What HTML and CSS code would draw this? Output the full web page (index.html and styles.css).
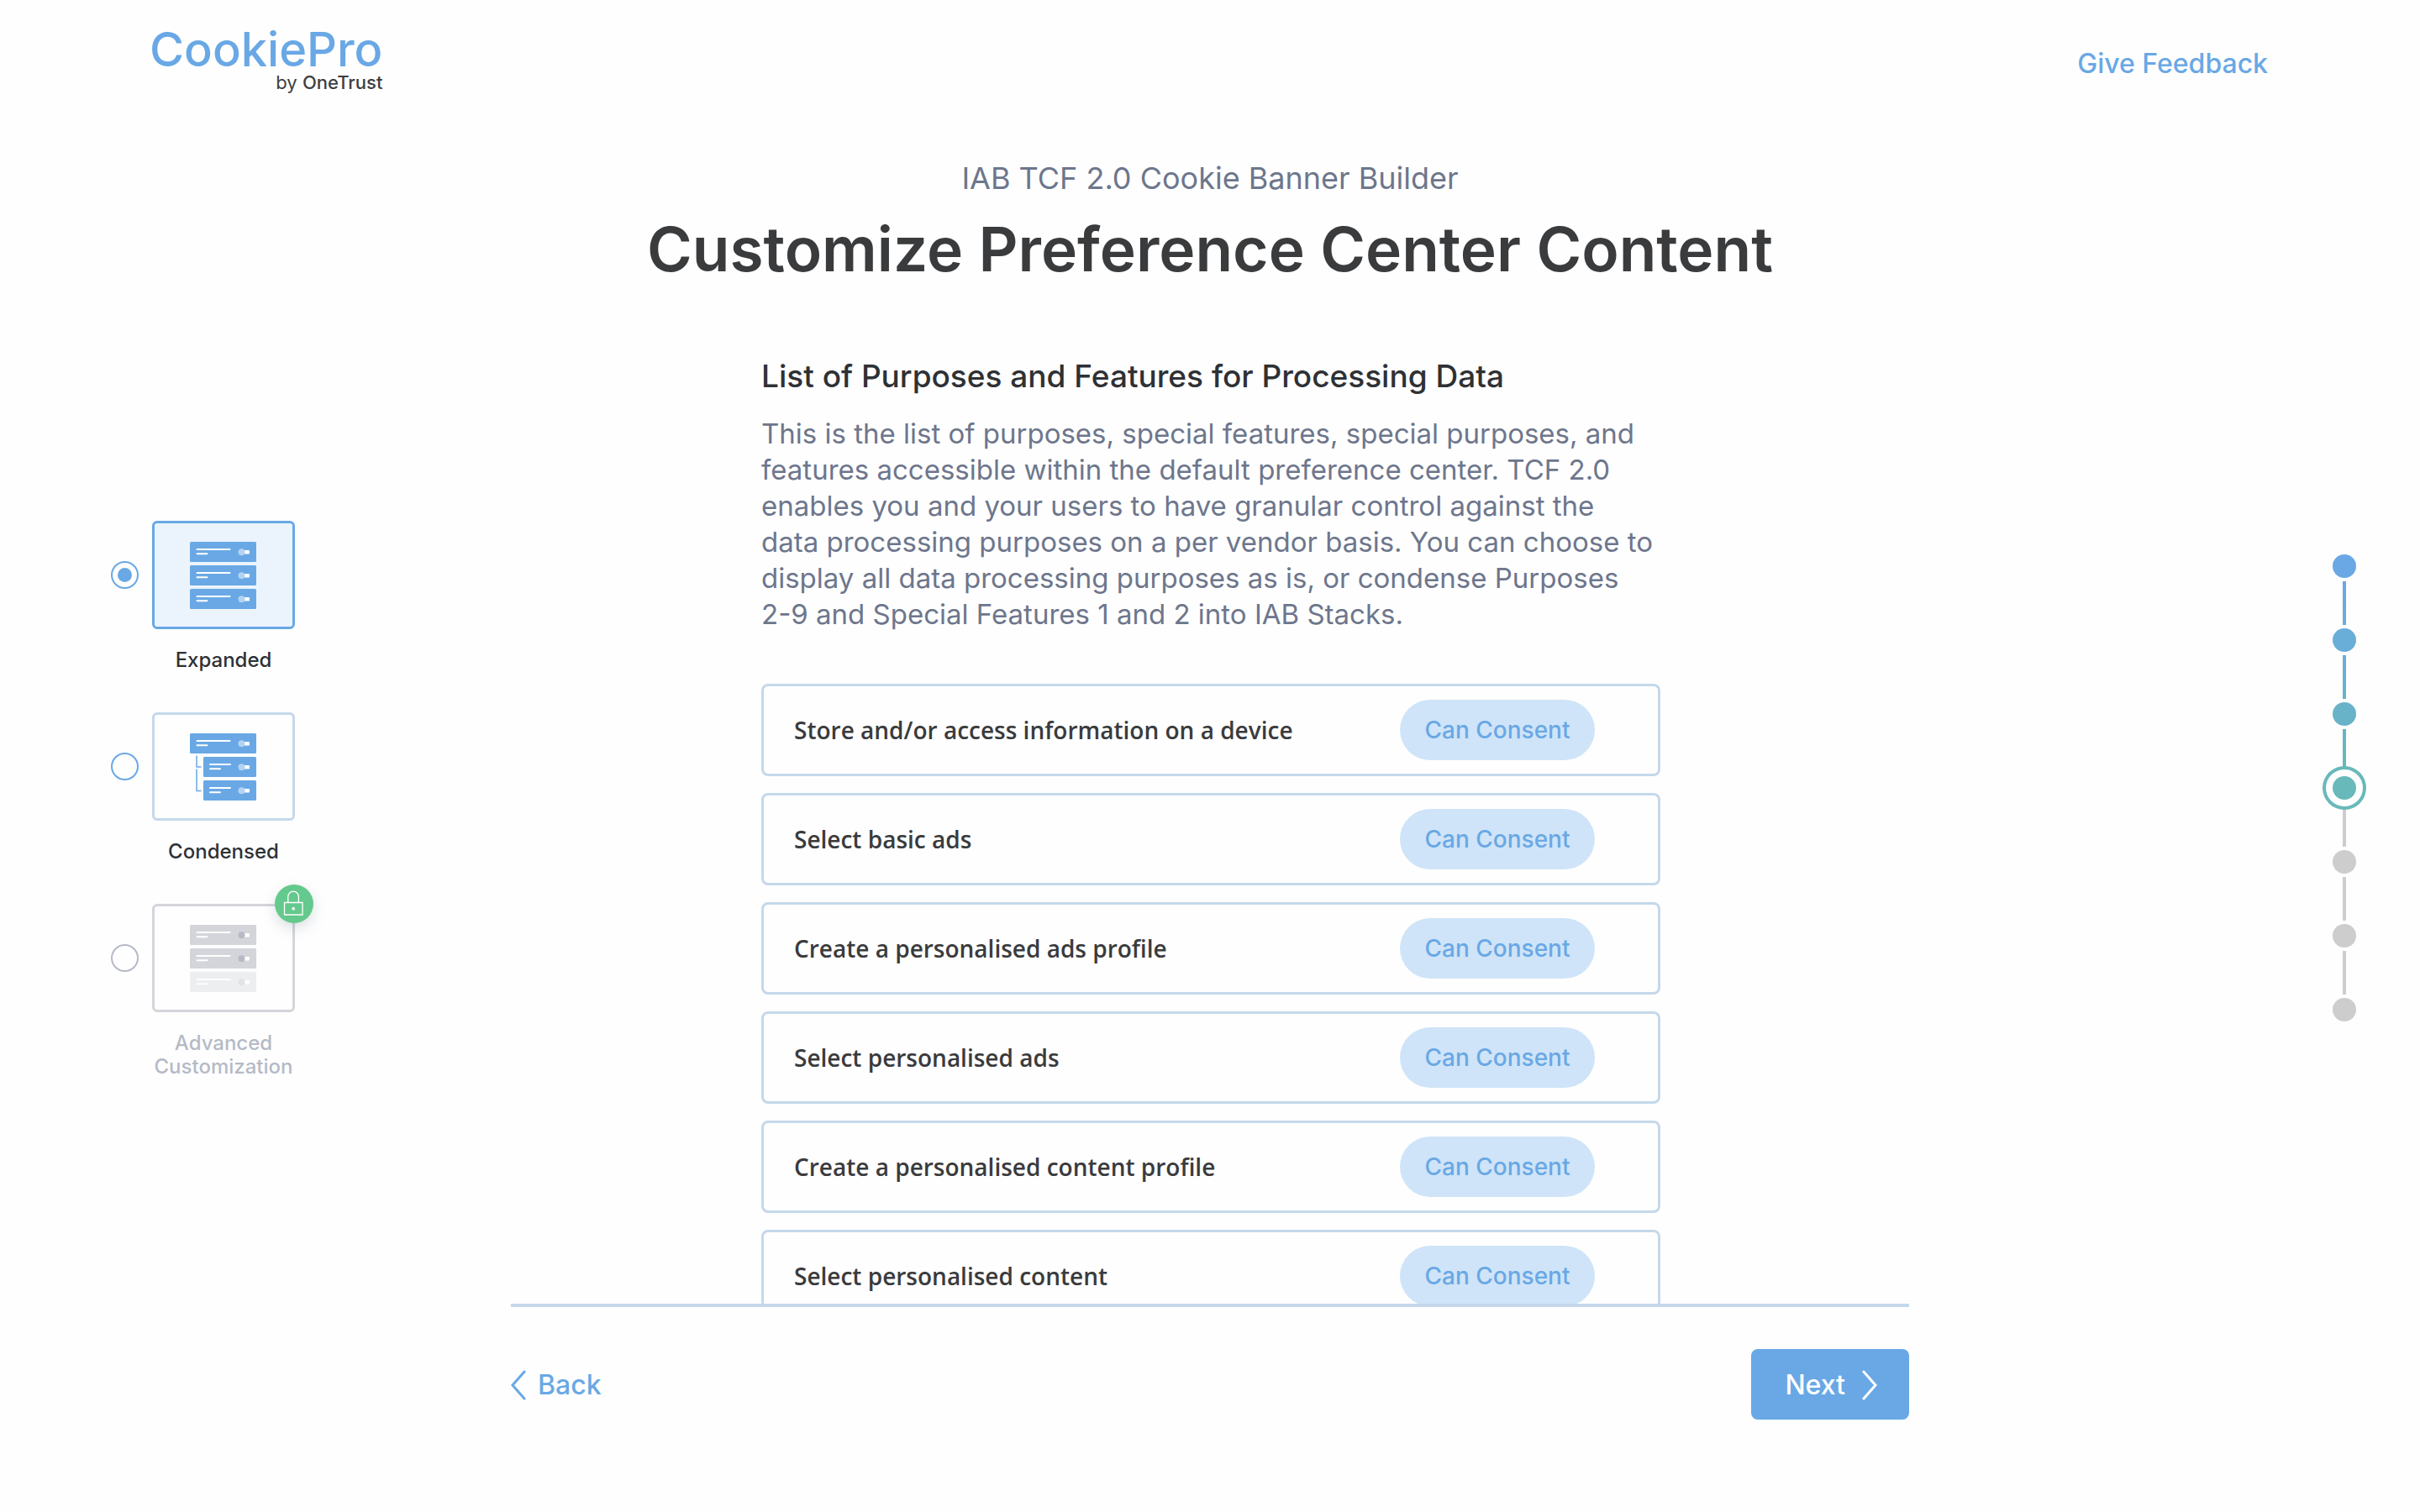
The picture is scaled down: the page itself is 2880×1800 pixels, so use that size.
FILE: index.html
```html
<!DOCTYPE html>
<html lang="en">
<head>
<meta charset="utf-8">
<meta name="viewport" content="width=device-width, initial-scale=1">
<title>CookiePro – Customize Preference Center Content</title>
<link rel="stylesheet" href="styles.css">
</head>
<body>
<svg class="defs" aria-hidden="true">
  <symbol id="bar-detail" viewBox="0 0 79 24">
    <path class="line" d="M8.500 9H47.500M8.500 14.300H20.500"/>
    <rect class="track" x="64" y="10" width="7" height="4.400" rx="1"/>
    <circle class="knob" cx="61.500" cy="12.200" r="4"/>
  </symbol>
</svg>

<header class="header">
  <a class="logo" href="#">
    <span class="logo-name">CookiePro</span>
    <span class="logo-by">by <b>OneTrust</b></span>
  </a>
  <a class="feedback" href="#">Give Feedback</a>
</header>

<main class="main">
  <div class="layouts" role="radiogroup" aria-label="Layout">
    <label class="option">
      <input class="radio" type="radio" name="layout" checked>
      <span class="thumb">
        <svg class="picture" viewBox="0 0 80 80" aria-hidden="true">
          <rect width="79" height="24" rx="1.500"/><use href="#bar-detail" width="79" height="24"/>
          <rect y="28" width="79" height="24" rx="1.500"/><use href="#bar-detail" y="28" width="79" height="24"/>
          <rect y="56" width="79" height="24" rx="1.500"/><use href="#bar-detail" y="56" width="79" height="24"/>
        </svg>
      </span>
      <span class="option-name">Expanded</span>
    </label>
    <label class="option">
      <input class="radio" type="radio" name="layout">
      <span class="thumb">
        <svg class="picture" viewBox="0 0 80 80" aria-hidden="true">
          <rect width="79" height="24" rx="1.500"/><use href="#bar-detail" width="79" height="24"/>
          <path class="tree" d="M8 26.500V40H13.500M8 42.500V68.500H13.500"/>
          <rect x="16" y="28" width="63" height="24" rx="1.500"/>
          <rect x="16" y="56" width="63" height="24" rx="1.500"/>
          <path class="line" d="M24 37H48M24 42.300H36M24 65H48M24 70.300H36"/>
          <rect class="track" x="64" y="38" width="7" height="4.400" rx="1"/><circle class="knob" cx="61.500" cy="40.200" r="4"/>
          <rect class="track" x="64" y="66" width="7" height="4.400" rx="1"/><circle class="knob" cx="61.500" cy="68.200" r="4"/>
        </svg>
      </span>
      <span class="option-name">Condensed</span>
    </label>
    <label class="option">
      <input class="radio" type="radio" name="layout" disabled>
      <span class="thumb">
        <svg class="picture" viewBox="0 0 80 80" aria-hidden="true">
          <rect width="79" height="24" rx="1.500"/><use href="#bar-detail" width="79" height="24"/>
          <rect y="28" width="79" height="24" rx="1.500"/><use href="#bar-detail" y="28" width="79" height="24"/>
          <g opacity=".38"><rect y="56" width="79" height="24" rx="1.500"/><use href="#bar-detail" y="56" width="79" height="24"/></g>
        </svg>
        <svg class="lock" viewBox="0 0 46 46" aria-hidden="true">
          <path d="M11.500 21.500H33V36H11.500ZM15.800 21.500V14.500A6.300 6.300 0 0 1 28.400 14.500V21.500"/>
          <circle cx="22.200" cy="28.700" r="1.200"/>
        </svg>
      </span>
      <span class="option-name">Advanced Customization</span>
    </label>
  </div>

  <section class="builder">
    <p class="kicker">IAB TCF 2.0 Cookie Banner Builder</p>
    <h1 class="title">Customize Preference Center Content</h1>
    <div class="scroller">
      <div class="content">
        <h2 class="heading">List of Purposes and Features for Processing Data</h2>
        <p class="text">This is the list of purposes, special features, special purposes, and features accessible within the default preference center. TCF 2.0 enables you and your users to have granular control against the data processing purposes on a per vendor basis. You can choose to display all data processing purposes as is, or condense Purposes <span class="nowrap">2-9</span> and Special Features 1 and 2 into IAB Stacks.</p>
        <ul class="purposes">
          <li class="purpose"><span>Store and/or access information on a device</span><span class="pill">Can Consent</span></li>
          <li class="purpose"><span>Select basic ads</span><span class="pill">Can Consent</span></li>
          <li class="purpose"><span>Create a personalised ads profile</span><span class="pill">Can Consent</span></li>
          <li class="purpose"><span>Select personalised ads</span><span class="pill">Can Consent</span></li>
          <li class="purpose"><span>Create a personalised content profile</span><span class="pill">Can Consent</span></li>
          <li class="purpose"><span>Select personalised content</span><span class="pill">Can Consent</span></li>
        </ul>
      </div>
    </div>
    <div class="actions">
      <button class="button back" type="button">
        <svg class="chevron" viewBox="0 0 18 36" aria-hidden="true"><path d="M16 2L2 18L16 34"/></svg>
        Back
      </button>
      <button class="button next" type="button">
        Next
        <svg class="chevron" viewBox="0 0 18 36" aria-hidden="true"><path d="M2 2L16 18L2 34"/></svg>
      </button>
    </div>
  </section>

  <ol class="steps" aria-label="Progress">
    <li class="step step-1"></li>
    <li class="step step-2"></li>
    <li class="step step-3"></li>
    <li class="step step-4" aria-current="step"></li>
    <li class="step"></li>
    <li class="step"></li>
    <li class="step"></li>
  </ol>
</main>
</body>
</html>
```
FILE: styles.css
```css
:root {
  --blue: #69a8e5;
  --line: #c5d8ea;
  --teal: #68b9b9;
  --grey: #b5bac6;
  --grey-light: #d4d5db;
  --slate: #6d768c;
  --ink: #2e3135;
}

* { box-sizing: border-box; }

body {
  display: flex;
  flex-direction: column;
  height: 100vh;
  margin: 0;
  background: #fefefe;
  color: var(--ink);
  font-family: Inter, "Liberation Sans", sans-serif;
}

h1, h2, p, ul, ol { margin: 0; padding: 0; }
ul, ol { list-style: none; }
a { color: var(--blue); text-decoration: none; }

.defs { position: absolute; width: 0; height: 0; }
.nowrap { white-space: nowrap; }

.header {
  display: flex;
  justify-content: space-between;
  align-items: flex-end;
  padding: 32px 181px 0 178px;
}
.logo { display: flex; flex-direction: column; }
.logo-name { font-size: 56px; line-height: 54px; font-weight: 500; }
.logo-by { align-self: flex-end; color: #3d3f42; font-size: 22px; line-height: 24px; }
.logo-by b { font-weight: 500; }
.feedback { padding: 18px 0 14px; font-size: 32px; line-height: 40px; font-weight: 500; }

.main {
  flex: 1;
  display: grid;
  grid-template-columns: 1fr minmax(0, 1664px) 1fr;
  grid-template-rows: minmax(0, 1fr);
  min-height: 0;
}

/* Layout picker */
.layouts {
  display: flex;
  flex-direction: column;
  align-self: center;
  gap: 48px;
  padding: 0 0 6px 132px;
}
.option {
  display: grid;
  grid-template-columns: 33px 170px;
  column-gap: 16px;
  row-gap: 23px;
  align-items: center;
}
.radio {
  display: grid;
  place-items: center;
  width: 33px;
  height: 33px;
  margin: 0;
  appearance: none;
  border: 2px solid var(--blue);
  border-radius: 50%;
}
.radio:checked::before {
  content: "";
  width: 17px;
  height: 17px;
  border-radius: 50%;
  background: var(--blue);
}
.radio:disabled { border-color: var(--grey); }
.thumb {
  position: relative;
  display: grid;
  place-items: center;
  height: 129px;
  border: 3px solid var(--line);
  border-radius: 6px;
}
.radio:checked + .thumb { border-color: var(--blue); background: #ebf4fc; }
.radio:disabled + .thumb { border-color: var(--grey-light); }
.picture { width: 80px; height: 80px; fill: var(--blue); --knob: #b4d3f2; }
.radio:disabled + .thumb .picture { fill: var(--grey-light); --knob: var(--grey); }
.line { fill: none; stroke: #fff; stroke-width: 2; stroke-linecap: round; }
.track { fill: #fff; }
.knob { fill: var(--knob); }
.tree { fill: none; stroke: var(--blue); stroke-width: 1.5; }
.lock {
  position: absolute;
  top: -26px;
  right: -25px;
  width: 46px;
  height: 46px;
  border-radius: 50%;
  background: #64c98c;
  box-shadow: 0 6px 16px rgba(80, 100, 120, .2);
  fill: none;
  stroke: #fff;
  stroke-width: 1.3;
}
.option-name {
  grid-column: 2;
  font-size: 24px;
  line-height: 28px;
  font-weight: 500;
  text-align: center;
}
.radio:disabled ~ .option-name { color: var(--grey); }

/* Builder */
.builder { display: flex; flex-direction: column; padding-top: 78px; }
.kicker { color: var(--slate); font-size: 36px; line-height: 48px; text-align: center; }
.title {
  margin-top: 17px;
  color: #3a3b3d;
  font-size: 73px;
  line-height: 88px;
  font-weight: 600;
  text-align: center;
}
.scroller {
  flex: 1;
  min-height: 0;
  margin-top: 20px;
  padding-left: 2px;
  overflow-y: auto;
  scrollbar-width: none;
}
.content { max-width: 1070px; margin: 0 auto; padding-top: 63px; }
.heading { font-size: 37px; line-height: 48px; font-weight: 500; }
.text { margin-top: 23px; padding-right: 4px; color: var(--slate); font-size: 33px; line-height: 43px; }
.purposes { display: flex; flex-direction: column; gap: 20px; margin-top: 61px; }
.purpose {
  display: flex;
  justify-content: space-between;
  align-items: center;
  height: 110px;
  padding: 0 75px 0 36px;
  border: 3px solid var(--line);
  border-radius: 8px;
  color: #3a3b3d;
  font: 600 28px/40px "Open Sans", "Noto Sans", sans-serif;
}
.pill {
  min-width: 232px;
  border-radius: 36px;
  background: #cfe4f8;
  color: var(--blue);
  font: 500 28px/72px Inter, "Liberation Sans", sans-serif;
  text-align: center;
}

.actions {
  display: flex;
  justify-content: space-between;
  padding: 50px 0 110px;
  border-top: 4px solid var(--line);
}
.button {
  display: flex;
  align-items: center;
  height: 84px;
  border: 0;
  border-radius: 8px;
  font: 500 32px/40px Inter, "Liberation Sans", sans-serif;
}
.back { gap: 14px; padding: 2px 0 0; background: none; color: var(--blue); }
.next { gap: 20px; padding: 2px 38px 0 40px; background: var(--blue); color: #fff; }
.chevron { width: 18px; height: 36px; fill: none; stroke: currentColor; stroke-width: 3; stroke-linecap: round; }

/* Progress */
.steps {
  display: flex;
  flex-direction: column;
  align-self: center;
  justify-self: end;
  gap: 60px;
  padding: 0 76px 34px 0;
}
.step {
  --from: #cdcdcd;
  --to: #cdcdcd;
  position: relative;
  width: 28px;
  height: 28px;
  border-radius: 50%;
  background: var(--from);
}
.step:not(:last-child)::after {
  content: "";
  position: absolute;
  top: 32px;
  left: 12px;
  width: 4px;
  height: 52px;
  background: linear-gradient(var(--from), var(--to));
}
.step-1 { --from: #69a8e5; --to: #69aedb; }
.step-2 { --from: #69aed9; --to: #68b3c9; }
.step-3 { --from: #68b3c8; --to: #68b9b9; }
.step-4 {
  background: var(--teal);
  box-shadow: 0 0 0 8px #fefefe, 0 0 0 12px var(--teal);
}
.step-4::after { z-index: -1; }
```
